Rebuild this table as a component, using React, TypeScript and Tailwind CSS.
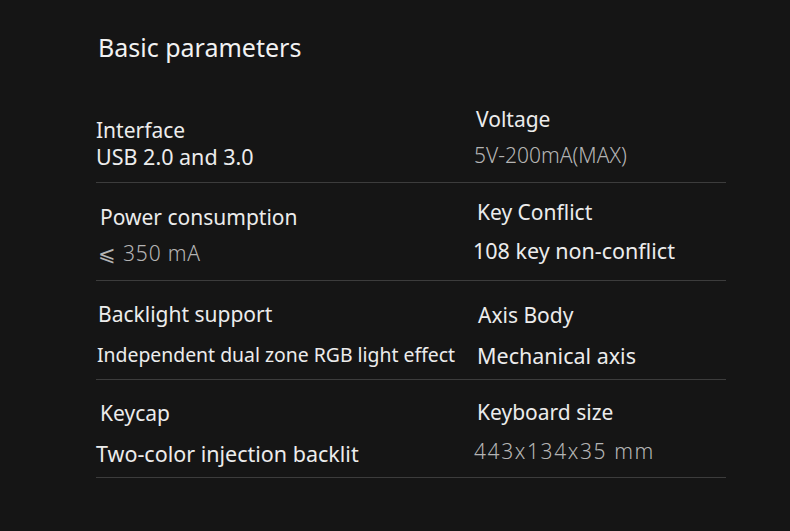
const label = "text-[21px] leading-6 text-[#ececec]";
const value = "text-[21.5px] leading-6 text-[#ececec]";
const thin = "text-[21px] leading-6 text-[#b4b4b4] font-light";

type Cell = {
  title: string;
  text: string;
  pt: string;
  gap: string;
  tx: string;
  vx: string;
  thin?: boolean;
  extra?: string;
};

const rows: { h: string; cells: [Cell, Cell] }[] = [
  {
    h: "h-[99px]",
    cells: [
      { title: "Interface", text: "USB 2.0 and 3.0", pt: "pt-[34px]", gap: "mt-[3px]", tx: "ml-0", vx: "ml-0" },
      { title: "Voltage", text: "5V-200mA(MAX)", pt: "pt-[23px]", gap: "mt-[12px]", tx: "ml-[2px]", vx: "ml-0", thin: true },
    ],
  },
  {
    h: "h-[98px]",
    cells: [
      { title: "Power consumption", text: "⩽ 350 mA", pt: "pt-[22px]", gap: "mt-[12px]", tx: "ml-[4px]", vx: "ml-[2px]", thin: true, extra: "tracking-[0.8px]" },
      { title: "Key Conflict", text: "108 key non-conflict", pt: "pt-[17px]", gap: "mt-[15px]", tx: "ml-[3px]", vx: "ml-[-1px]" },
    ],
  },
  {
    h: "h-[99px]",
    cells: [
      { title: "Backlight support", text: "Independent dual zone RGB light effect", pt: "pt-[21px]", gap: "mt-[17px]", tx: "ml-[2px]", vx: "ml-[1px]", extra: "!text-[19.4px]" },
      { title: "Axis Body", text: "Mechanical axis", pt: "pt-[22px]", gap: "mt-[17px]", tx: "ml-[4px]", vx: "ml-[3px]" },
    ],
  },
  {
    h: "h-[98px]",
    cells: [
      { title: "Keycap", text: "Two-color injection backlit", pt: "pt-[21px]", gap: "mt-[17px]", tx: "ml-[4px]", vx: "ml-0" },
      { title: "Keyboard size", text: "443x134x35 mm", pt: "pt-[20px]", gap: "mt-[15px]", tx: "ml-[3px]", vx: "ml-0", thin: true, extra: "tracking-[1.6px]" },
    ],
  },
];

export default function App() {
  return (
    <div
      className="w-[790px] h-[531px] bg-[#151515] overflow-hidden"
      style={{ fontFamily: '"Noto Sans", "Open Sans", sans-serif' }}
    >
      <div className="pl-[96px] pt-[31px]">
        <h1 className="ml-[2px] text-[25px] leading-8 text-[#f2f2f2] font-normal">
          Basic parameters
        </h1>
        <div className="w-[630px] mt-[21px]">
          {rows.map((r, i) => (
            <div key={i} className={`grid grid-cols-[378px_252px] border-b border-[#3c3c3c] ${r.h}`}>
              {r.cells.map((c) => (
                <div key={c.title} className={c.pt}>
                  <div className={`${label} ${c.tx} whitespace-nowrap`}>{c.title}</div>
                  <div className={`${c.thin ? thin : value} ${c.gap} ${c.vx} ${c.extra ?? ""} whitespace-nowrap`}>
                    {c.text}
                  </div>
                </div>
              ))}
            </div>
          ))}
        </div>
      </div>
    </div>
  );
}
